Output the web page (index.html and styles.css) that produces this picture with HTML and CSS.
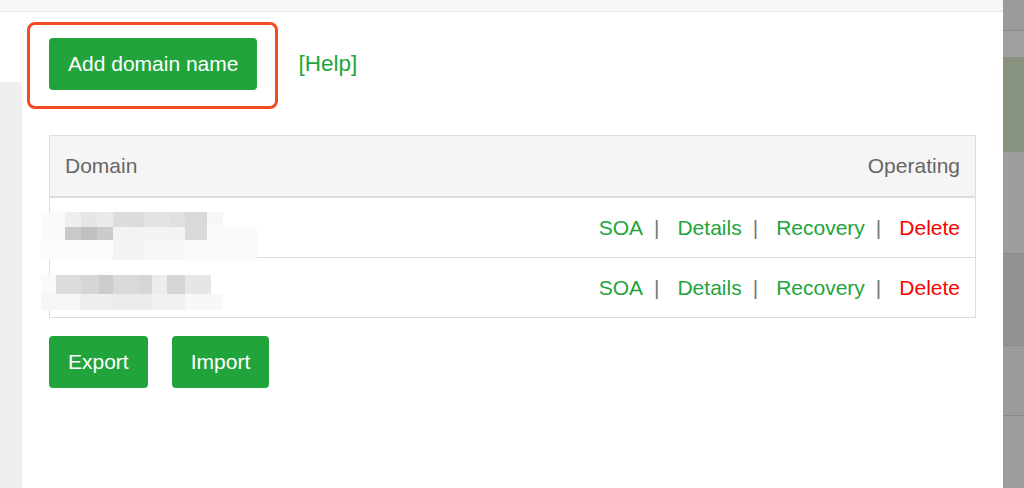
FILE: index.html
```html
<!DOCTYPE html>
<html lang="en">
    <head>
        <meta charset="UTF-8">
        <meta name="viewport" content="width=device-width, initial-scale=1.0">
        <title>Domain list</title>
        <link rel="stylesheet" href="styles.css">
    </head>
    <body>
        <div class="page">
            <div class="topbar"></div>
            <div class="layout">
                <div class="sidebar">
                    <div class="sidebar__panel"></div>
                </div>
                <main class="content">
                    <div class="toolbar">
                        <span class="highlight"><button class="btn">Add domain name</button></span>
                        <a href="#" class="link link--help">[Help]</a>
                    </div>

                    <table class="domains">
                        <thead>
                            <tr>
                                <th class="domains__name">Domain</th>
                                <th class="domains__ops">Operating</th>
                            </tr>
                        </thead>
                        <tbody>
                            <tr>
                                <td class="domains__name">
                                    <!-- pixelated domain name -->
                                    <div class="redact redact--first">
                                        <div class="redact__band band-a1"></div>
                                        <div class="redact__band band-a2"></div>
                                        <div class="redact__band band-a3"></div>
                                    </div>
                                </td>
                                <td class="domains__ops"><a href="#" class="link">SOA</a><span class="sep">|</span><a href="#" class="link">Details</a><span class="sep">|</span><a href="#" class="link">Recovery</a><span class="sep">|</span><a href="#" class="link link--danger">Delete</a></td>
                            </tr>
                            <tr>
                                <td class="domains__name">
                                    <div class="redact redact--second">
                                        <div class="redact__band band-b1"></div>
                                        <div class="redact__band band-b2"></div>
                                    </div>
                                </td>
                                <td class="domains__ops"><a href="#" class="link">SOA</a><span class="sep">|</span><a href="#" class="link">Details</a><span class="sep">|</span><a href="#" class="link">Recovery</a><span class="sep">|</span><a href="#" class="link link--danger">Delete</a></td>
                            </tr>
                        </tbody>
                    </table>

                    <div class="actions">
                        <button class="btn">Export</button>
                        <button class="btn">Import</button>
                    </div>
                </main>
            </div>
        </div>

        <!-- the page behind the dialog -->
        <div class="rail">
            <div class="rail__seg rail__seg--top"></div>
            <div class="rail__seg rail__seg--mid"></div>
            <div class="rail__seg rail__seg--green"></div>
            <div class="rail__seg rail__seg--plain"></div>
            <div class="rail__seg rail__seg--dark"></div>
            <div class="rail__seg rail__seg--plain2"></div>
            <div class="rail__seg rail__seg--rest"></div>
        </div>
    </body>
</html>
```

FILE: styles.css
```css
*, *:before, *:after {
    box-sizing: border-box;
}

body {
    margin: 0;
    height: 488px;
    display: flex;
    overflow: hidden;
    font-family: 'Liberation Sans', Arial, sans-serif;
    font-size: 21px;
    background: #fff;
}

.page {
    flex: 1;
    display: flex;
    flex-direction: column;
}

.topbar {
    height: 12px;
    background: #f7f7f7;
    border-bottom: 1px solid #e6e6e6;
}

.layout {
    flex: 1;
    display: flex;
}

.sidebar {
    width: 22px;
    display: flex;
    flex-direction: column;
}

.sidebar__panel {
    flex: 1;
    margin-top: 70px;
    background: #efefef;
}

.content {
    flex: 1;
    padding: 26px 27px 0 27px;
}

.toolbar {
    display: flex;
    align-items: center;
    gap: 41px;
}

.highlight {
    position: relative;
    display: inline-flex;
}

/* red annotation box round the button */
.highlight::after {
    content: '';
    position: absolute;
    top: -16px;
    left: -22px;
    right: -21px;
    bottom: -19px;
    border: 3px solid #f24c22;
    border-radius: 8px;
}

.btn {
    height: 52px;
    padding: 0 19px;
    border: 0;
    border-radius: 4px;
    background: #22a43c;
    color: #fff;
    font-family: 'Liberation Sans', Arial, sans-serif;
    font-size: 21px;
    cursor: pointer;
}

.link {
    color: #22a43c;
    text-decoration: none;
}

.link--help {
    font-size: 22.5px;
}

.link--danger {
    color: #ff0000;
}

.domains {
    width: 100%;
    margin-top: 45px;
    border-spacing: 0;
    border: 1px solid #dddddd;
}

.domains th {
    height: 62px;
    padding: 0 15px;
    font-weight: normal;
    color: #666;
    background: #f5f5f5;
    border-bottom: 2px solid #dddddd;
}

.domains td {
    height: 59px;
    padding: 0 15px;
}

.domains tbody tr:first-child td {
    height: 60px;
    border-bottom: 1px solid #dddddd;
}

.domains__name {
    text-align: left;
    position: relative;
}

.domains__ops {
    text-align: right;
}

.sep {
    color: #777;
    margin: 0 18px 0 11px;
}

.redact {
    position: absolute;
    left: -9px;
    width: 216px;
}

.redact--first {
    top: 14px;
}

.redact--second {
    top: 17px;
}

.band-a1 {
    height: 15px;
    background: linear-gradient(to right, #fafafa 0 24px, #eeeeee 24px 40px, #e6e6e6 40px 56px, #eaeaea 56px 72px, #dddddd 72px 90px, #dcdcdc 90px 103px, #e3e3e3 103px 129px, #e0e0e0 129px 144px, #d9d9d9 144px 166px, #f7f7f7 166px 182px, transparent 182px);
}

.band-a2 {
    height: 13px;
    background: linear-gradient(to right, #fafafa 0 24px, #c9c9c9 24px 40px, #c0c0c0 40px 56px, #cbcbcb 56px 72px, #f3f3f3 72px 144px, #dadada 144px 166px, #f9f9f9 166px 216px);
}

.band-a3 {
    height: 20px;
    background: linear-gradient(to right, #fbfbfb 0 72px, #f3f3f3 72px 103px, #f8f8f8 103px 144px, #fafafa 144px 216px);
}

.band-b1 {
    height: 19px;
    background: linear-gradient(to right, #fafafa 0 15px, #dcdcdc 15px 40px, #d6d6d6 40px 58px, #cccccc 58px 72px, #d9d9d9 72px 98px, #d6d6d6 98px 111px, #ececec 111px 126px, #d6d6d6 126px 144px, #e6e6e6 144px 170px, transparent 170px);
}

.band-b2 {
    height: 16px;
    background: linear-gradient(to right, #f6f6f6 0 39px, #efefef 39px 72px, #ebebeb 72px 111px, #f1f1f1 111px 144px, #f8f8f8 144px 182px, transparent 182px);
}

.actions {
    display: flex;
    gap: 24px;
    margin-top: 18px;
}

.rail {
    width: 21px;
    display: flex;
    flex-direction: column;
    background: #9d9d9d;
}

.rail__seg {
    border-bottom: 1px solid #8a8a8a;
}

.rail__seg--top {
    height: 31px;
    background: #9b9b9b;
}

.rail__seg--mid {
    height: 26px;
    border-bottom: 0;
    background: #a0a0a0;
}

.rail__seg--green {
    height: 95px;
    border-bottom: 0;
    background: #87927f;
}

.rail__seg--plain {
    height: 102px;
    background: #9e9e9e;
}

.rail__seg--dark {
    height: 92px;
    background: #939393;
}

.rail__seg--plain2 {
    height: 70px;
    background: #9c9c9c;
}

.rail__seg--rest {
    flex: 1;
    border-bottom: 0;
    background: #9d9d9d;
}
```
